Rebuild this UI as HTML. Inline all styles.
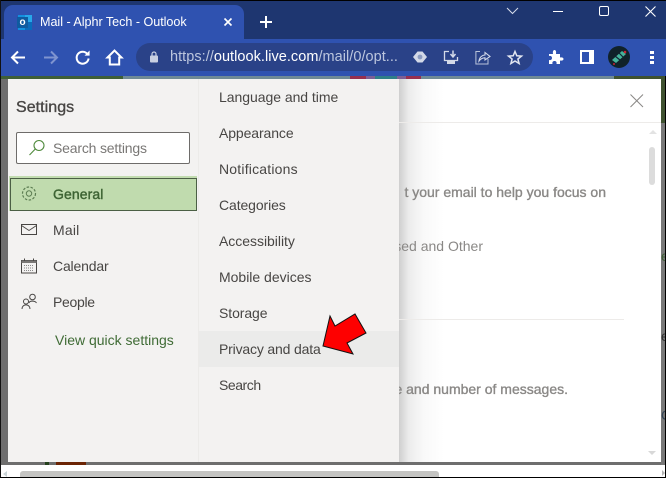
<!DOCTYPE html>
<html><head><meta charset="utf-8"><style>
html,body{margin:0;padding:0}
body{width:666px;height:478px;position:relative;overflow:hidden;background:#fff;font-family:"Liberation Sans",sans-serif}
.a{position:absolute}
.t{position:absolute;white-space:nowrap;font-size:14px;line-height:18px;color:#484644;letter-spacing:0}
svg{position:absolute;overflow:visible}
</style></head><body>
<div class="a" style="left:0;top:0;width:666px;height:39px;background:#1e3670"></div>
<div class="a" style="left:0;top:0;width:666px;height:1px;background:#000"></div>
<div class="a" style="left:4px;top:5px;width:240px;height:36px;background:#2f52b0;border-radius:9px 9px 0 0"></div>
<div class="a" style="left:0;top:39px;width:666px;height:37px;background:#2f52b0"></div>
<div class="a" style="left:0;top:0;width:1px;height:478px;background:#111"></div>
<!-- outlook icon -->
<div class="a" style="left:23px;top:15px;width:9px;height:8px;background:#28a8ea"></div>
<div class="a" style="left:23px;top:22px;width:9px;height:8px;background:#0a6cbc"></div>
<div class="a" style="left:18px;top:15px;width:7px;height:15px;background:#1490df"></div>
<div class="a" style="left:17px;top:17px;width:11px;height:11px;background:#0f5ba0;color:#fff;font-size:10px;font-weight:bold;line-height:11px;text-align:center">o</div>
<div class="t" style="left:40px;top:13px;color:#fff;font-size:12.6px;letter-spacing:-.03px">Mail - Alphr Tech - Outlook</div>
<svg style="left:224px;top:18px" width="8" height="8"><path d="M.5 .5L7.500 7.500M7.500 .5L.5 7.500" stroke="#fff" stroke-width="1.600"/></svg>
<svg style="left:259px;top:15px" width="14" height="14"><path d="M7 1V13M1 7H13" stroke="#fff" stroke-width="2"/></svg>
<!-- window controls -->
<svg style="left:506px;top:6px" width="14" height="10"><path d="M1 2L6.500 7.500L12 2" stroke="#d6dcea" fill="none" stroke-width="1"/></svg>
<div class="a" style="left:553px;top:11px;width:10px;height:1px;background:#fff"></div>
<div class="a" style="left:599px;top:6px;width:8px;height:8px;border:1px solid #fff;border-radius:2px"></div>
<svg style="left:645px;top:6px" width="12" height="12"><path d="M.5 .5L10.500 10.500M10.500 .5L.5 10.500" stroke="#fff" stroke-width="1.100"/></svg>
<!-- nav -->
<svg style="left:10px;top:50px" width="16" height="16"><path d="M15 7.500H2M8 1.500L2 7.500L8 13.500" stroke="#fff" stroke-width="2" fill="none"/></svg>
<svg style="left:43px;top:50px" width="16" height="16"><path d="M1 7.500H14M8 1.500L14 7.500L8 13.500" stroke="#7f94cf" stroke-width="2" fill="none"/></svg>
<svg style="left:75px;top:50px" width="16" height="16"><path d="M12.600 4.300A6 6 0 1 0 13.600 8.500" stroke="#fff" stroke-width="2" fill="none"/><path d="M9.500 5.600H14.600V.5Z" fill="#fff"/></svg>
<svg style="left:106px;top:49px" width="17" height="17"><path d="M1.500 8.500L8.500 1.500L15.500 8.500H13.200V15.500H3.800V8.500Z" stroke="#fff" stroke-width="2" fill="none"/></svg>
<!-- omnibox -->
<div class="a" style="left:136px;top:43px;width:397px;height:28px;border-radius:14px;background:#2a4288"></div>
<svg style="left:149px;top:51px" width="10" height="12"><rect x="1" y="4.500" width="8" height="7" rx="1" fill="#c9d0e2"/><path d="M3 5V3a2 2 0 0 1 4 0V5" stroke="#c9d0e2" fill="none" stroke-width="1.200"/></svg>
<div class="t" style="left:170px;top:48px;font-size:14.500px;letter-spacing:.04px;color:#fff"><span style="color:#bcc6de">https://</span>outlook.live.com<span style="color:#bcc6de">/mail/0/opt...</span></div>
<svg style="left:412px;top:50px" width="16" height="14"><path d="M1 7L5.500 1.500H10.500L15 7L10.500 12.500H5.500Z" fill="#d3d9e8"/><circle cx="8" cy="7" r="2.400" fill="#8b9bc0"/></svg>
<svg style="left:443px;top:50px" width="16" height="15"><path d="M6 1.500H1.500V10.500H14.500V7" stroke="#d3d9e8" fill="none" stroke-width="1.300"/><path d="M10 .5V6M7.500 4L10 7L12.500 4" stroke="#d3d9e8" fill="none" stroke-width="1.500"/><rect x="4" y="11" width="8" height="3" fill="#d3d9e8"/></svg>
<svg style="left:475px;top:50px" width="16" height="15"><path d="M5 1.500H.9V14H13V9" stroke="#b9c3da" fill="none" stroke-width="1"/><path d="M4 11C4.500 7 7.500 5 10 5V2.500L15 6.500L10 10V7.800C7.500 7.800 5.500 9 4 11Z" stroke="#d3d9e8" fill="none" stroke-width="1.100"/></svg>
<svg style="left:507px;top:50px" width="16" height="15"><path d="M8 1.500L9.800 5.800L14.500 6.100L10.900 9L12.100 13.500L8 11L3.900 13.500L5.100 9L1.500 6.100L6.200 5.800Z" stroke="#e2e6f0" stroke-width="1.500" fill="none"/></svg>
<svg style="left:548px;top:49px" width="16" height="16"><path d="M1 5H5C4.500 2 5.500 1 6.500 1S8.500 2 8 5H12V8.500C14.500 8 15.500 9 15.500 10S14.500 12 12 11.500V15H8.500C9 13 8 12 6.500 12S4 13 4.500 15H1V11C3 11.500 4 10.500 4 9S3 6.500 1 7Z" fill="#fff"/></svg>
<svg style="left:580px;top:50px" width="14" height="14"><rect x="1" y="1" width="12" height="12" fill="#2f52b0" stroke="#fff" stroke-width="2"/><rect x="9" y="1" width="4" height="12" fill="#fff"/></svg>
<svg style="left:608px;top:46px" width="22" height="22"><circle cx="11" cy="11" r="11" fill="#10222a"/><path d="M4 14L14 5L18 8L8 17Z" fill="#45b39a"/><path d="M7 10L12 14M11 7L15 11" stroke="#123" stroke-width="1.200"/><circle cx="17" cy="6" r="1.300" fill="#c23"/><circle cx="6" cy="18" r="1" fill="#c23"/></svg>
<div class="a" style="left:650px;top:51px;width:4px;height:3px;background:#fff"></div>
<div class="a" style="left:650px;top:56px;width:4px;height:3px;background:#fff"></div>
<div class="a" style="left:650px;top:61px;width:4px;height:3px;background:#fff"></div>

<!-- page strip -->
<div class="a" style="left:1px;top:76px;width:122px;height:3px;background:#3f5f37"></div>
<div class="a" style="left:123px;top:76px;width:491px;height:3px;background:#6f8a96"></div>
<div class="a" style="left:350px;top:76px;width:71px;height:3px;background:#96304f"></div>
<div class="a" style="left:366px;top:76px;width:40px;height:3px;background:#7d5f95"></div>
<div class="a" style="left:375px;top:76px;width:22px;height:3px;background:#2f7f88"></div>
<div class="a" style="left:614px;top:76px;width:52px;height:3px;background:#3f5230"></div>
<div class="a" style="left:1px;top:79px;width:7px;height:386px;background:#6e6e6e"></div>
<div class="a" style="left:1px;top:462px;width:660px;height:3px;background:#6e6e6e"></div>
<div class="a" style="left:45px;top:462px;width:4px;height:3px;background:#24401c"></div>
<div class="a" style="left:56px;top:462px;width:30px;height:3px;background:#6b2404"></div>
<div class="a" style="left:661px;top:79px;width:4px;height:386px;background:#787878"></div>
<div class="a" style="left:661px;top:79px;width:4px;height:44px;background:#3f5230"></div>
<div class="a" style="left:665px;top:76px;width:1px;height:402px;background:#000"></div>
<div class="a" style="left:661px;top:250px;width:4px;height:12px;overflow:hidden"><div class="t" style="left:0;top:-3px;color:#3f5f37">e</div></div>
<div class="a" style="left:661px;top:330px;width:4px;height:12px;overflow:hidden"><div class="t" style="left:0;top:-3px;color:#333">e</div></div>
<div class="a" style="left:661px;top:408px;width:4px;height:14px;overflow:hidden"><div class="t" style="left:0;top:-2px;color:#345">C</div></div>

<!-- dialog -->
<div class="a" style="left:8px;top:79px;width:653px;height:383px;background:#fff"></div>
<div class="a" style="left:399px;top:79px;width:45px;height:383px;background:linear-gradient(90deg,#cfcfcf,#ececec 22%,#f9f9f9 55%,#fff)"></div>
<div class="a" style="left:399px;top:122px;width:262px;height:1px;background:#edebe9"></div>
<div class="a" style="left:399px;top:319px;width:225px;height:1px;background:#edebe9"></div>
<svg style="left:630px;top:94px" width="14" height="14"><path d="M.5 .5L13 13M13 .5L.5 13" stroke="#8a8886" stroke-width="1" fill="none"/></svg>
<div class="a" style="left:649px;top:130px;width:0;height:0;border-left:4px solid transparent;border-right:4px solid transparent;border-bottom:4px solid #e3e3e3"></div>
<div class="a" style="left:649px;top:147px;width:6px;height:38px;border-radius:3px;background:#dcdcdc"></div>
<div class="a" style="left:648px;top:451px;width:0;height:0;border-left:4px solid transparent;border-right:4px solid transparent;border-top:4px solid #d8d8d8"></div>
<div class="t" style="right:60px;top:183px;color:#8a8886;-webkit-text-stroke:.35px #8a8886">t your email to help you focus on</div>
<div class="t" style="right:183px;top:237px;color:#8a8886">sed and Other</div>
<div class="t" style="right:98px;top:380px;color:#8a8886;-webkit-text-stroke:.35px #8a8886">e and number of messages.</div>

<!-- left panels -->
<div class="a" style="left:8px;top:79px;width:391px;height:383px;background:#f3f2f1"></div>
<div class="a" style="left:198px;top:79px;width:1px;height:383px;background:#ecebe9"></div>
<div class="t" style="left:16px;top:99px;font-size:16px;letter-spacing:.05px;-webkit-text-stroke:.35px #484644">Settings</div>
<div class="a" style="left:16px;top:132px;width:172px;height:30px;background:#fff;border:1px solid #6e6c6a;border-radius:2px"></div>
<svg style="left:28px;top:139px" width="18" height="18"><circle cx="11" cy="6.500" r="5" fill="none" stroke="#4f8a3c" stroke-width="1.100"/><path d="M7.300 10L1.500 16" stroke="#4f8a3c" stroke-width="1.100"/></svg>
<div class="t" style="left:53px;top:139px;color:#797775;letter-spacing:-.18px">Search settings</div>
<div class="a" style="left:9px;top:176px;width:188px;height:35px;background:#c2dcb0"></div>
<div class="a" style="left:10px;top:178px;width:185px;height:31px;background:#c0dbae;border:1px solid #4b5f45"></div>
<svg style="left:21px;top:185px" width="16" height="17"><circle cx="8" cy="8.500" r="2.700" fill="none" stroke="#5c7d52"/><circle cx="8" cy="8.500" r="6.500" fill="none" stroke="#5c7d52" stroke-width="1.200" stroke-dasharray="2.500 1.500"/></svg>
<div class="t" style="left:53px;top:185px;color:#3d6333;-webkit-text-stroke:.4px #3d6333;letter-spacing:.1px">General</div>
<svg style="left:21px;top:224px" width="17" height="12"><rect x=".5" y=".5" width="15" height="10" fill="none" stroke="#484644"/><path d="M.5 1.500L8 6.500L15.500 1.500" fill="none" stroke="#484644" stroke-width=".9"/></svg>
<div class="t" style="left:53px;top:221px;letter-spacing:.2px">Mail</div>
<svg style="left:21px;top:258px" width="17" height="16"><rect x=".5" y="2.500" width="15" height="12.500" fill="none" stroke="#484644"/><rect x=".5" y="2.500" width="15" height="2.500" fill="#7a7876"/><path d="M3.500 .5V3M12.500 .5V3" stroke="#484644"/><path d="M3 7.500H13M3 10H13M3 12.500H13" stroke="#888" stroke-dasharray="1 1"/></svg>
<div class="t" style="left:53px;top:257px;letter-spacing:-.17px">Calendar</div>
<svg style="left:21px;top:293px" width="17" height="17"><circle cx="11.500" cy="4" r="2.800" fill="none" stroke="#484644"/><path d="M8 10C8.500 7.500 14 7.500 15.500 10" fill="none" stroke="#484644" stroke-width=".9"/><circle cx="5" cy="8.500" r="2.500" fill="none" stroke="#484644"/><path d="M1 16C1 10.500 9 10.500 9 16" fill="none" stroke="#484644"/></svg>
<div class="t" style="left:53px;top:293px;letter-spacing:-.3px">People</div>
<div class="t" style="left:55px;top:331px;color:#3f6b35;letter-spacing:0">View quick settings</div>
<div class="t" style="left:219px;top:88px;letter-spacing:-.04px">Language and time</div>
<div class="t" style="left:219px;top:124px;letter-spacing:-.1px">Appearance</div>
<div class="t" style="left:219px;top:160px;letter-spacing:.2px">Notifications</div>
<div class="t" style="left:219px;top:196px;letter-spacing:-.1px">Categories</div>
<div class="t" style="left:219px;top:232px;letter-spacing:-.03px">Accessibility</div>
<div class="t" style="left:219px;top:268px;letter-spacing:-.01px">Mobile devices</div>
<div class="t" style="left:219px;top:304px;letter-spacing:-.08px">Storage</div>
<div class="a" style="left:199px;top:331px;width:200px;height:36px;background:#ebebea"></div>
<div class="t" style="left:219px;top:340px;letter-spacing:-.17px">Privacy and data</div>
<div class="t" style="left:219px;top:376px;letter-spacing:-.45px">Search</div>

<!-- red arrow -->
<svg style="left:320px;top:310px" width="50" height="50"><path d="M3 36L10 6L15 16L35 4L46 23L27 33L33 44Z" fill="#fe0000" stroke="#111" stroke-width="1"/></svg>

<!-- bottom scrollbar -->
<div class="a" style="left:1px;top:465px;width:664px;height:12px;background:#fff"></div>
<div class="a" style="left:20px;top:471px;width:419px;height:6px;border-radius:3px 3px 0 0;background:#c4c4c2"></div>
<div class="a" style="left:3px;top:471px;width:0;height:0;border-top:3px solid transparent;border-bottom:3px solid transparent;border-right:4px solid #c9d3d6"></div>
<div class="a" style="left:662px;top:470px;width:0;height:0;border-top:3px solid transparent;border-bottom:3px solid transparent;border-left:3px solid #b5b5b5"></div>
<div class="a" style="left:0;top:477px;width:666px;height:1px;background:#000"></div>
</body></html>
